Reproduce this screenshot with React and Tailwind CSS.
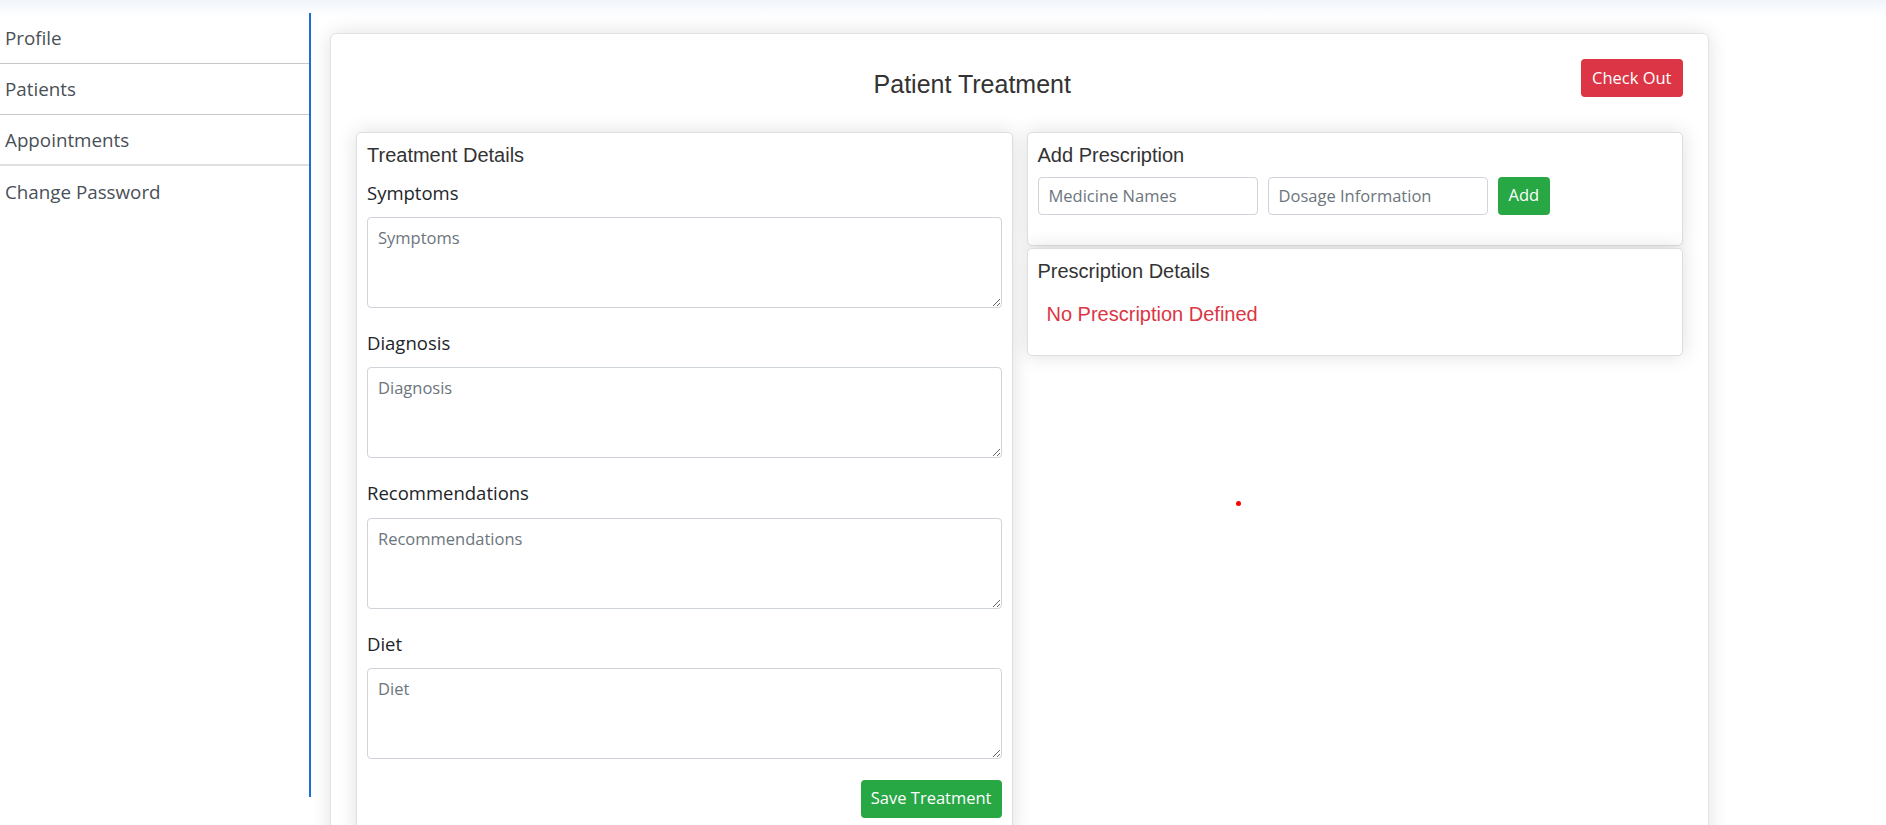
import React from 'react';

const navItems = ['Profile', 'Patients', 'Appointments', 'Change Password'];
const fields = ['Symptoms', 'Diagnosis', 'Recommendations', 'Diet'];

const heading = "font-['Liberation_Sans',Arial,sans-serif] text-[20px] leading-[24px] text-[#333]";
const cardBox = 'rounded-[5px] border border-[#dedede] bg-white shadow-[0_0_20px_rgba(0,0,0,0.13)]';

export default function App() {
  return (
    <div className="relative min-h-[825px] overflow-hidden bg-white bg-[linear-gradient(to_bottom,#f1f5fa,#ffffff_17px)] pt-[13px] font-['Open_Sans',sans-serif]">
      <div className="flex">
        <aside className="h-[784px] w-[311px] shrink-0 border-r-2 border-[#1b6fd8]">
          {navItems.map((item, i) => (
            <div
              key={item}
              className={`flex h-[51px] items-center pl-[5px] pt-[1px] text-[18.8px] text-[#495057] ${i < 2 ? 'border-b border-[#c8c8c8]' : i === 2 ? 'border-b-2 border-[#e0e0e0]' : ''}`}
            >
              {item}
            </div>
          ))}
        </aside>

        <main className="pl-[19px] pt-[20px]">
          <div className="w-[1379px] rounded-[6px] border border-[#e3e3e3] bg-white px-[25px] pt-[25px] pb-[30px] shadow-[0_0_20px_rgba(0,0,0,0.12)]">
            <div className="flex items-start">
              <h1 className="flex-1 pl-[8px] pt-[10px] text-center font-['Liberation_Sans',Arial,sans-serif] text-[25px] leading-[30px] text-[#333]">
                Patient Treatment
              </h1>
              <button className="flex h-[38px] items-center rounded-[4px] bg-[#dc3545] px-[11.5px] text-[16.5px] text-white">
                Check Out
              </button>
            </div>

            <div className="mt-[33px] grid grid-cols-2 items-start gap-[14px]">
              <section className={`${cardBox} px-[10px] pt-[10px] pb-[20px]`}>
                <h5 className={heading}>Treatment Details</h5>
                <div className="mt-[11.5px] flex flex-col gap-[21.4px]">
                  {fields.map((f) => (
                    <div key={f}>
                      <label className="mb-[10.5px] block text-[18.5px] leading-[28px] text-[#212529]">{f}</label>
                      <textarea
                        placeholder={f}
                        className="block h-[90.6px] w-full rounded-[4px] border border-[#ced4da] px-[10px] py-[7px] text-[16.5px] leading-[25px] text-[#495057] placeholder:text-[#6c757d] outline-none"
                      />
                    </div>
                  ))}
                </div>
                <div className="mt-[20.5px] flex justify-end">
                  <button className="flex h-[38px] items-center rounded-[4px] bg-[#28a745] px-[10px] text-[16.5px] text-white">
                    Save Treatment
                  </button>
                </div>
              </section>

              <div className="flex flex-col">
                <section className={`${cardBox} px-[10px] pt-[10px] pb-[30px]`}>
                  <h5 className={heading}>Add Prescription</h5>
                  <div className="mt-[9.5px] flex items-center gap-[10px]">
                    <input
                      placeholder="Medicine Names"
                      className="h-[38.5px] w-[220px] rounded-[4px] border border-[#ced4da] px-[10px] text-[16.5px] text-[#495057] placeholder:text-[#6c757d] outline-none"
                    />
                    <input
                      placeholder="Dosage Information"
                      className="h-[38.5px] w-[220px] rounded-[4px] border border-[#ced4da] px-[10px] text-[16.5px] text-[#495057] placeholder:text-[#6c757d] outline-none"
                    />
                    <button className="flex h-[38.5px] items-center rounded-[4px] bg-[#28a745] px-[11px] text-[16.5px] text-white">
                      Add
                    </button>
                  </div>
                </section>
                <section className={`${cardBox} mt-[1.5px] px-[10px] pt-[10px] pb-[29px]`}>
                  <h5 className={heading}>Prescription Details</h5>
                  <p className="mt-[19px] pl-[9px] font-['Liberation_Sans',Arial,sans-serif] text-[20px] leading-[24px] text-[#dc3545]">
                    No Prescription Defined
                  </p>
                </section>
              </div>
            </div>
          </div>
        </main>
      </div>

      <span className="absolute left-[1236px] top-[501px] h-[5px] w-[5px] rounded-full bg-[#f00]" />
    </div>
  );
}
